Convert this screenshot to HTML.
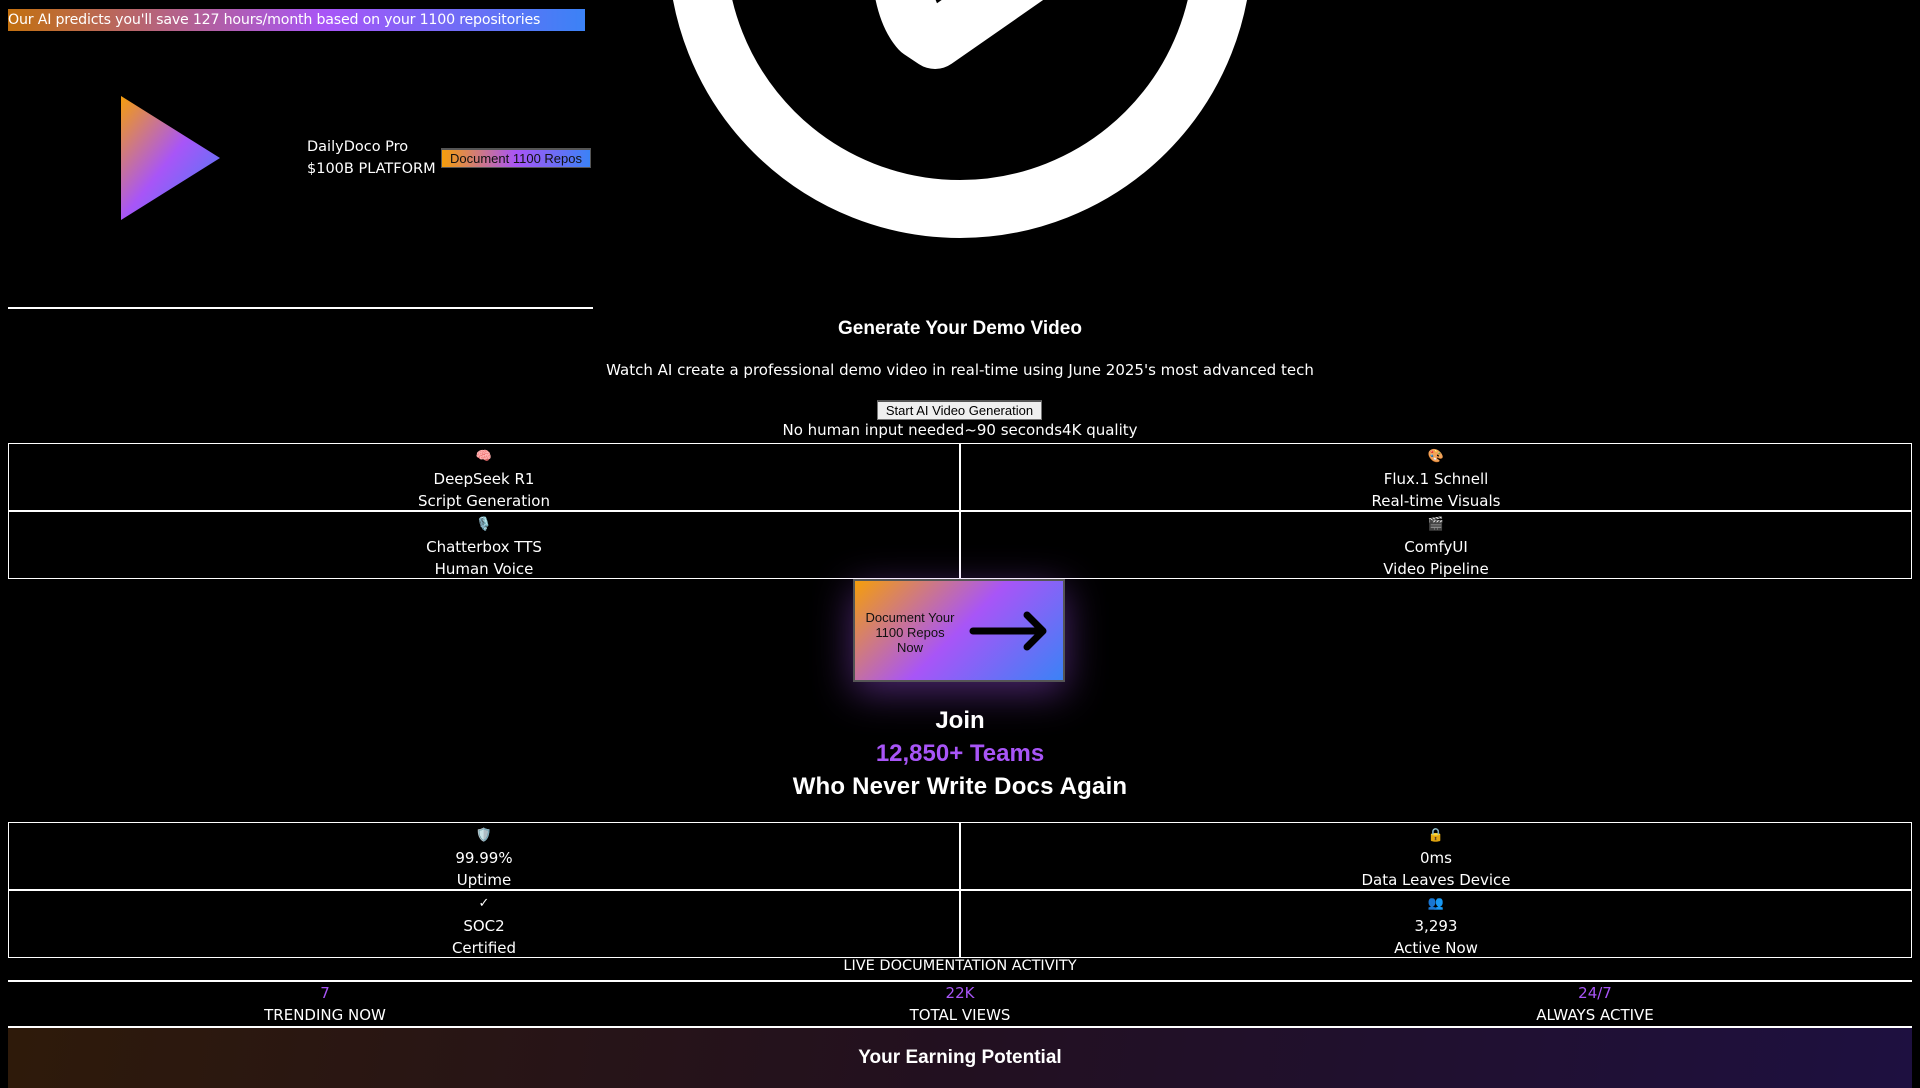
<!DOCTYPE html>
<html><head><meta charset="utf-8"><style>
*{margin:0;padding:0;box-sizing:border-box}
body{width:1920px;height:1080px;background:#000;color:#fff;font-family:"DejaVu Sans",sans-serif;font-size:15px;overflow:hidden;position:relative}
.a{position:absolute}
.c{text-align:center;left:0;width:1920px}
.h{font-family:"Liberation Sans",sans-serif;font-weight:bold}
.grid{position:absolute;left:8px;width:1904px;display:grid;grid-template-columns:1fr 1fr}
.grid div{border:1px solid #fff;height:68px;text-align:center;line-height:22px;padding-top:0}
.ic{font-size:13px}
.stat{position:absolute;text-align:center;width:634px;line-height:22px}
</style></head><body>
<svg class="a" style="left:0;top:0" width="1920" height="300">
<defs><linearGradient id="tg" x1="0" y1="0" x2="1" y2="1"><stop offset="0" stop-color="#f59e0b"/><stop offset=".5" stop-color="#a855f7"/><stop offset="1" stop-color="#3b82f6"/></linearGradient></defs>
<circle cx="960" cy="-54" r="263" fill="none" stroke="#fff" stroke-width="58"/>
<path d="M900 -40 Q902 10 920 30 L935 40 L1100 -75" fill="none" stroke="#fff" stroke-width="58" stroke-linecap="round" stroke-linejoin="round"/>
<polygon points="121,96 220,158 121,220" fill="url(#tg)"/>
</svg>
<div class="a" style="left:8px;top:9px;width:577px;height:22px;line-height:22px;background:linear-gradient(90deg,#c2700f,#a855f7 55%,#3b82f6);font-size:14.2px;white-space:nowrap;overflow:hidden;letter-spacing:-0.2px">Our AI predicts you'll save 127 hours/month based on your 1100 repositories</div>
<div class="a" style="left:307px;top:136px;line-height:22px;font-size:14.5px">DailyDoco Pro<br>$100B PLATFORM</div>
<div class="a" style="left:441px;top:148px;width:150px;height:20px;border:1px solid #555;border-top:2px solid #555;background:linear-gradient(90deg,#f59e0b,#a855f7 50%,#3b82f6);color:#111;font:13px 'Liberation Sans',sans-serif;line-height:17px;text-align:center">Document 1100 Repos</div>
<div class="a" style="left:8px;top:307px;width:585px;height:2px;background:#fff"></div>
<div class="a c h" style="top:318px;font-size:19px">Generate Your Demo Video</div>
<div class="a c" style="top:361px">Watch AI create a professional demo video in real-time using June 2025's most advanced tech</div>
<div class="a" style="left:877px;top:400px;width:165px;height:20px;background:#efefef;border:1px solid #767676;border-top:2px solid #555;color:#000;font:13px 'Liberation Sans',sans-serif;line-height:17px;text-align:center">Start AI Video Generation</div>
<div class="a c" style="top:421px">No human input needed~90 seconds4K quality</div>
<div class="grid" style="top:443px">
<div><span class="ic">🧠</span><br>DeepSeek R1<br>Script Generation</div>
<div><span class="ic">🎨</span><br>Flux.1 Schnell<br>Real-time Visuals</div>
<div><span class="ic">🎙️</span><br>Chatterbox TTS<br>Human Voice</div>
<div><span class="ic">🎬</span><br>ComfyUI<br>Video Pipeline</div>
</div>
<div class="a" style="left:853px;top:579px;width:212px;height:103px;border:2px solid #555;background:linear-gradient(135deg,#f59e0b,#a855f7 50%,#3b82f6);box-shadow:0 10px 40px rgba(168,85,247,.45);color:#111;font:13px 'Liberation Sans',sans-serif">
<div class="a" style="left:8px;top:29px;width:94px;text-align:center;line-height:15px">Document Your 1100 Repos Now</div>
<svg class="a" style="left:112px;top:28px" width="90" height="45"><path d="M6 22 H76 M60 6 L76 22 L60 38" fill="none" stroke="#000" stroke-width="7" stroke-linecap="round" stroke-linejoin="round"/></svg>
</div>
<div class="a c h" style="top:704px;font-size:24px;line-height:33px">Join<br><span style="color:#a855f7">12,850+ Teams</span><br><span style="letter-spacing:0.2px">Who Never Write Docs Again</span></div>
<div class="grid" style="top:822px">
<div><span class="ic">🛡️</span><br>99.99%<br>Uptime</div>
<div><span class="ic">🔒</span><br>0ms<br>Data Leaves Device</div>
<div><span class="ic">✓</span><br>SOC2<br>Certified</div>
<div><span class="ic">👥</span><br>3,293<br>Active Now</div>
</div>
<div class="a c" style="top:958px;font-size:14.5px">LIVE DOCUMENTATION ACTIVITY</div>
<div class="a" style="left:8px;top:980px;width:1904px;height:2px;background:#fff"></div>
<div class="stat" style="left:8px;top:982px"><span style="color:#a855f7">7</span><br>TRENDING NOW</div>
<div class="stat" style="left:643px;top:982px"><span style="color:#a855f7">22K</span><br>TOTAL VIEWS</div>
<div class="stat" style="left:1278px;top:982px"><span style="color:#a855f7">24/7</span><br>ALWAYS ACTIVE</div>
<div class="a" style="left:8px;top:1026px;width:1904px;height:2px;background:#fff"></div>
<div class="a" style="left:8px;top:1028px;width:1904px;height:60px;background:linear-gradient(100deg,#2e1a0a,#221020 50%,#1e1040)"></div>
<div class="a c h" style="top:1047px;font-size:19px">Your Earning Potential</div>
</body></html>
